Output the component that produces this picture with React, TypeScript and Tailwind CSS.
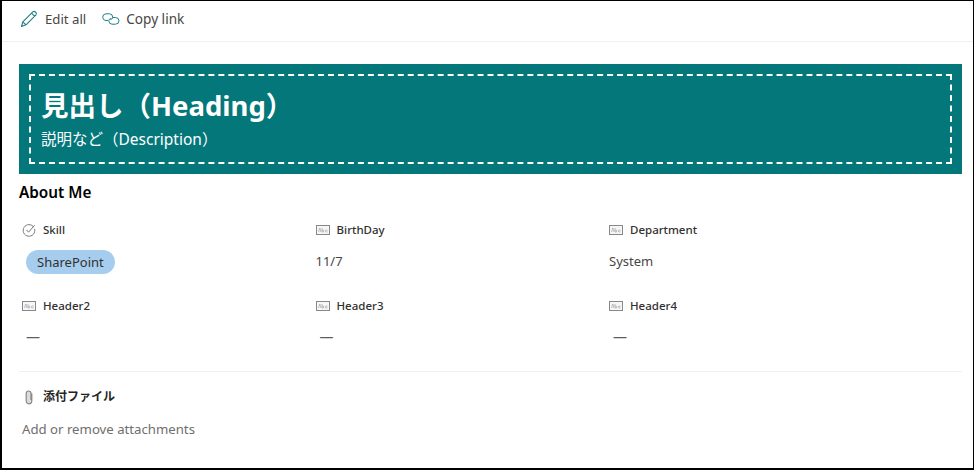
import React from 'react';

const sans = 'font-["Noto_Sans","Noto_Sans_CJK_JP",sans-serif]';

const TextIcon = () => (
  <svg width="14" height="10" viewBox="0 0 14 10" fill="none" className="shrink-0">
    <rect x="0.5" y="0.5" width="13" height="9" fill="#f6f6f6" stroke="#8a8886" />
    <path d="M2.5 7 L3.8 3 L5 7 M6 3 V7 H7.5 Q8.3 6 7.5 5.1 H6 M11.5 5.1 Q9.5 4.5 9.3 6 Q9.5 7.5 11.5 6.9" stroke="#8f9aa5" strokeWidth="0.6" />
  </svg>
);

const ChoiceIcon = () => (
  <svg width="14" height="14" viewBox="0 0 14 14" fill="none" className="shrink-0">
    <path d="M11.8 4.2 A5.8 5.8 0 1 0 12.6 6" stroke="#7a7a7a" strokeWidth="1" />
    <path d="M4.3 6.8 L6.6 9.2 L12.6 2.2" stroke="#7a7a7a" strokeWidth="1" />
  </svg>
);

type Field = { label: string; icon: React.ReactNode; value: string; pill?: boolean };

const fields: Field[] = [
  { label: 'Skill', icon: <ChoiceIcon />, value: 'SharePoint', pill: true },
  { label: 'BirthDay', icon: <TextIcon />, value: '11/7' },
  { label: 'Department', icon: <TextIcon />, value: 'System' },
  { label: 'Header2', icon: <TextIcon />, value: '—' },
  { label: 'Header3', icon: <TextIcon />, value: '—' },
  { label: 'Header4', icon: <TextIcon />, value: '—' },
];

const App = () => {
  return (
    <div className={`w-[974px] h-[470px] bg-white border-l-2 border-r border-t border-b-2 border-black overflow-hidden text-[#323130] ${sans}`}>
      {/* Command bar */}
      <div className="h-[41px] flex items-center pl-[18px] pb-[3px] border-b border-[#f0f0f0]">
        <div className="flex items-center gap-[7px]">
          <svg width="18" height="18" viewBox="0 0 18 18" fill="none">
            <path d="M1.5 16.5 L2.8 11.8 L12.8 1.8 Q14 0.8 15.5 2 Q17 3.5 16 4.8 L6 14.8 Z M11.5 3.2 L14.7 6.3 M2.8 11.8 L6 14.8" stroke="#1f7f86" strokeWidth="1.1" strokeLinejoin="round" />
          </svg>
          <span className="text-[13.2px] text-[#484644]">Edit all</span>
        </div>
        <div className="flex items-center gap-[6px] ml-[16px]">
          <svg width="18" height="12" viewBox="0 0 18 12" fill="none">
            <path d="M6 7.5 H4 Q0.7 7.3 0.7 4.2 Q0.7 1 4 0.8 H7.5 Q10.7 1 10.7 4.2 Q10.7 6.2 8.5 6.5" stroke="#1f7f86" strokeWidth="1" />
            <path d="M11 4.5 H13.5 Q17 4.7 17 7.8 Q17 11 13.5 11.2 H10 Q6.8 11 6.8 7.8 Q6.8 5.8 9 5.5" stroke="#1f7f86" strokeWidth="1" />
          </svg>
          <span className="text-[13.6px] text-[#484644]">Copy link</span>
        </div>
      </div>

      <div className="pl-[17px] pr-[11px] pt-[22px]">
        {/* Banner */}
        <div className="h-[110px] bg-[#04777b] p-[10px]">
          <div className="h-[90px] border-2 border-dashed border-white pl-[10px] pt-[12px] text-white">
            <h1 className="text-[27.5px] leading-[36px] font-bold">見出し（Heading）</h1>
            <p className="text-[15.5px] leading-[20px] mt-[5px]">説明など（Description）</p>
          </div>
        </div>

        <h2 className="text-[15.3px] leading-[20px] font-semibold text-black mt-[8px]">About Me</h2>

        {/* Fields */}
        <div className="grid grid-cols-[293.5px_293.5px_1fr] pl-[3px] pt-[18px] gap-y-[22px]">
          {fields.map((f) => (
            <div key={f.label} className="h-[54px]">
              <div className="h-[20px] flex items-center gap-[7px] text-[11.5px] font-medium">
                <span className="w-[14px] flex justify-center">{f.icon}</span>
                <span>{f.label}</span>
              </div>
              <div className="h-[24px] mt-[10px] flex items-center text-[13px]">
                {f.pill ? (
                  <span className="ml-[4px] h-[24px] px-[11px] rounded-full bg-[#a6cdee] leading-[24px]">{f.value}</span>
                ) : f.value === '—' ? (
                  <span className="ml-[4px] mb-[4px] text-[14px] text-[#605e5c]">{f.value}</span>
                ) : (
                  <span className="text-[#484644]">{f.value}</span>
                )}
              </div>
            </div>
          ))}
        </div>

        {/* Attachments */}
        <div className="border-t border-[#f0f0f0] mt-[21px] pl-[3px] pt-[15px]">
          <div className="h-[20px] flex items-center gap-[7px] text-[12px] font-semibold text-[#252423]">
            <span className="w-[14px] flex justify-center">
              <svg width="10" height="15" viewBox="0 0 10 15" fill="none">
                <path d="M7.8 3.5 V10.5 Q7.8 13.8 5 13.8 Q2.2 13.8 2.2 10.5 V3.5 Q2.2 1 4.6 1 Q7 1 7 3.5 V10" stroke="#8a8886" strokeWidth="1.2" fill="#dcdcdc" />
              </svg>
            </span>
            <span>添付ファイル</span>
          </div>
          <div className="mt-[13px] text-[13.2px] text-[#6f6e6d]">Add or remove attachments</div>
        </div>
      </div>
    </div>
  );
};

export default App;
